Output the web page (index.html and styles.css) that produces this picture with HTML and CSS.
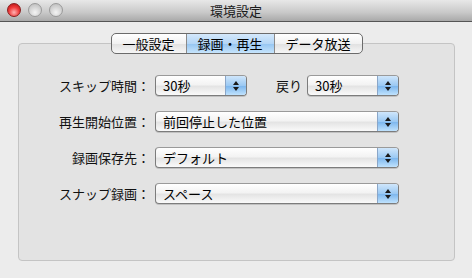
FILE: index.html
```html
<!DOCTYPE html>
<html lang="ja">

<head>
  <meta charset="UTF-8">
  <title>環境設定</title>
  <link rel="stylesheet" href="styles.css">
</head>

<body>

  <div class="window">
    <div class="titlebar">
      <div class="lights">
        <span class="light close"></span>
        <span class="light"></span>
        <span class="light"></span>
      </div>
      <div class="title">環境設定</div>
    </div>

    <div class="content">
      <div class="tabs">
        <div class="tab tab-general">一般設定</div>
        <div class="tab tab-record selected">録画・再生</div>
        <div class="tab tab-data">データ放送</div>
      </div>

      <div class="panel">
        <div class="row">
          <div class="label">スキップ時間：</div>
          <div class="popup small"><span class="value">30秒</span><span class="arrows"></span></div>
          <div class="label-inline">戻り</div>
          <div class="popup small"><span class="value">30秒</span><span class="arrows"></span></div>
        </div>

        <div class="row">
          <div class="label">再生開始位置：</div>
          <div class="popup wide"><span class="value">前回停止した位置</span><span class="arrows"></span></div>
        </div>

        <div class="row">
          <div class="label">録画保存先：</div>
          <div class="popup wide"><span class="value">デフォルト</span><span class="arrows"></span></div>
        </div>

        <div class="row">
          <div class="label">スナップ録画：</div>
          <div class="popup wide"><span class="value">スペース</span><span class="arrows"></span></div>
        </div>
      </div>
    </div>
  </div>

</body>

</html>
```

FILE: styles.css
```css
body {
  margin: 0;
  font-family: "Noto Sans CJK JP", "Noto Sans", sans-serif;
  font-size: 13px;
  color: #000;
  background: #ececec;
}

.window {
  width: 472px;
  height: 278px;
  background: #ececec;
  overflow: hidden;
}

.titlebar {
  position: relative;
  height: 21px;
  background: linear-gradient(#e8e8e8, #c8c8c8 60%, #a9a9a9);
  border-bottom: 1px solid #555;
}

.lights {
  display: flex;
  gap: 7px;
  padding: 3px 0 0 7px;
}

.light {
  width: 14px;
  height: 14px;
  border-radius: 50%;
  box-sizing: border-box;
  border: 1px solid #9a9a9a;
  background: radial-gradient(circle at 50% 70%, #f4f4f4, #d2d2d2 55%, #b8b8b8);
}

.light.close {
  border-color: #8a1d1d;
  background: radial-gradient(circle at 50% 70%, #ffb3b3, #ef3b3b 50%, #b00d0d);
}

.title {
  position: absolute;
  top: 0;
  left: 0;
  right: 0;
  line-height: 21px;
  text-align: center;
  color: #1a1a1a;
}

.content {
  padding: 11px 17px 0 18px;
}

.tabs {
  position: relative;
  z-index: 1;
  display: flex;
  width: 252px;
  height: 21px;
  margin: 0 auto -11px;
  box-sizing: border-box;
  border: 1px solid #6b6b6b;
  border-radius: 5px;
  background: linear-gradient(#ffffff, #f1f1f1 50%, #e2e2e2 55%, #f6f6f6);
  overflow: hidden;
}

.tab {
  line-height: 19px;
  text-align: center;
  border-right: 1px solid #8a8a8a;
}

.tab-general {
  width: 74px;
}

.tab-record {
  width: 87px;
}

.tab-data {
  flex: 1;
  border-right: none;
}

.tab.selected {
  background: linear-gradient(#d4e8fb, #b4d6f6 50%, #98c7f2 55%, #c6e4fc);
}

.panel {
  height: 218px;
  box-sizing: border-box;
  padding-top: 31px;
  background: #e3e3e3;
  border: 1px solid #c4c4c4;
  border-radius: 4px;
}

.row {
  display: flex;
  align-items: center;
  height: 21px;
  margin-bottom: 15px;
}

.label {
  width: 131px;
  text-align: right;
  color: #111;
}

.label-inline {
  margin-left: 29px;
  width: 26px;
  color: #111;
}

.popup {
  display: flex;
  height: 21px;
  margin-left: 5px;
  box-sizing: border-box;
  border: 1px solid #7c7c7c;
  border-top-color: #9a9a9a;
  border-radius: 4px;
  background: linear-gradient(#ffffff, #f3f3f3 45%, #e4e4e4 55%, #fafafa);
  box-shadow: 0 1px 0 rgba(0, 0, 0, 0.15);
  overflow: hidden;
}

.popup.small {
  width: 92px;
}

.popup.wide {
  width: 244px;
}

.value {
  flex: 1;
  padding-left: 7px;
  line-height: 19px;
}

.arrows {
  position: relative;
  width: 20px;
  border-left: 1px solid #8aa6c8;
  background: linear-gradient(#cfe6fb, #9bc9f3 50%, #7fb8ee 55%, #bfe2fd);
}

.arrows::before,
.arrows::after {
  content: "";
  position: absolute;
  left: 7px;
  border-left: 3px solid transparent;
  border-right: 3px solid transparent;
}

.arrows::before {
  top: 5px;
  border-bottom: 4px solid #1a1a1a;
}

.arrows::after {
  top: 11px;
  border-top: 4px solid #1a1a1a;
}
```
